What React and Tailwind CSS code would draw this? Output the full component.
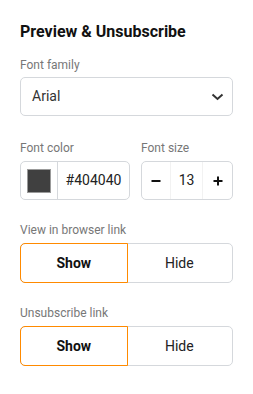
import { useState } from "react";

function Toggle({ value, onChange }) {
  return (
    <div className="flex h-[40px] w-full rounded-[5px] border border-[#d5d8dc] text-[14px]">
      <button
        onClick={() => onChange(true)}
        className={
          value
            ? "-m-px flex-1 rounded-l-[5px] border border-[#ff8a00] font-bold text-[#111]"
            : "flex-1 text-[#222]"
        }
      >
        Show
      </button>
      <button
        onClick={() => onChange(false)}
        className={
          !value
            ? "-m-px flex-1 rounded-r-[5px] border border-[#ff8a00] font-bold text-[#111]"
            : "flex-1 text-[#222]"
        }
      >
        Hide
      </button>
    </div>
  );
}

export default function App() {
  const [size, setSize] = useState(13);
  const [browserLink, setBrowserLink] = useState(true);
  const [unsubLink, setUnsubLink] = useState(true);

  return (
    <div className="min-h-screen bg-white px-5 pt-[22px] font-['Roboto',sans-serif] text-[#222]">
      <h2 className="text-[16px] font-bold leading-[20px] text-[#111]">
        Preview &amp; Unsubscribe
      </h2>

      <div className="mt-[15px]">
        <label className="block text-[12px] leading-[16px] text-[#777]">
          Font family
        </label>
        <div className="mt-[4px] flex h-[39px] items-center justify-between rounded-[5px] border border-[#d5d8dc] pl-[11px] pr-[8px] text-[14px] text-[#333]">
          <span>Arial</span>
          <svg width="13" height="8" viewBox="0 0 13 8" fill="none">
            <path d="M1.5 1.5 L6.5 6 L11.5 1.5" stroke="#333" strokeWidth="2" />
          </svg>
        </div>
      </div>

      <div className="mt-[24px] flex gap-[11px]">
        <div className="w-[110px]">
          <label className="block text-[12px] leading-[16px] text-[#777]">
            Font color
          </label>
          <div className="mt-[5px] flex h-[39px] items-center rounded-[5px] border border-[#d5d8dc]">
            <div className="flex h-full w-[37px] items-center justify-center border-r border-[#d5d8dc]">
              <div className="h-[24px] w-[24px] border border-[#9a9a9a] bg-[#404040]" />
            </div>
            <span className="flex-1 text-center text-[14px] text-[#222]">#404040</span>
          </div>
        </div>
        <div className="flex-1">
          <label className="block text-[12px] leading-[16px] text-[#777]">
            Font size
          </label>
          <div className="mt-[5px] flex h-[39px] items-center rounded-[5px] border border-[#d5d8dc] text-[14px]">
            <button
              onClick={() => setSize(size - 1)}
              className="flex h-full w-[29px] items-center justify-center border-r border-[#f2f2f2]"
            >
              <svg width="10" height="10" viewBox="0 0 10 10">
                <path d="M0.5 5 H9.5" stroke="#111" strokeWidth="2" />
              </svg>
            </button>
            <span className="flex-1 text-center text-[#222]">{size}</span>
            <button
              onClick={() => setSize(size + 1)}
              className="flex h-full w-[30px] items-center justify-center border-l border-[#f2f2f2]"
            >
              <svg width="10" height="10" viewBox="0 0 10 10">
                <path d="M0.5 5 H9.5 M5 0.5 V9.5" stroke="#111" strokeWidth="2" />
              </svg>
            </button>
          </div>
        </div>
      </div>

      <div className="mt-[22px]">
        <label className="block text-[12px] leading-[16px] text-[#777]">
          View in browser link
        </label>
        <div className="mt-[5px]">
          <Toggle value={browserLink} onChange={setBrowserLink} />
        </div>
      </div>

      <div className="mt-[22px]">
        <label className="block text-[12px] leading-[16px] text-[#777]">
          Unsubscribe link
        </label>
        <div className="mt-[5px]">
          <Toggle value={unsubLink} onChange={setUnsubLink} />
        </div>
      </div>
    </div>
  );
}
